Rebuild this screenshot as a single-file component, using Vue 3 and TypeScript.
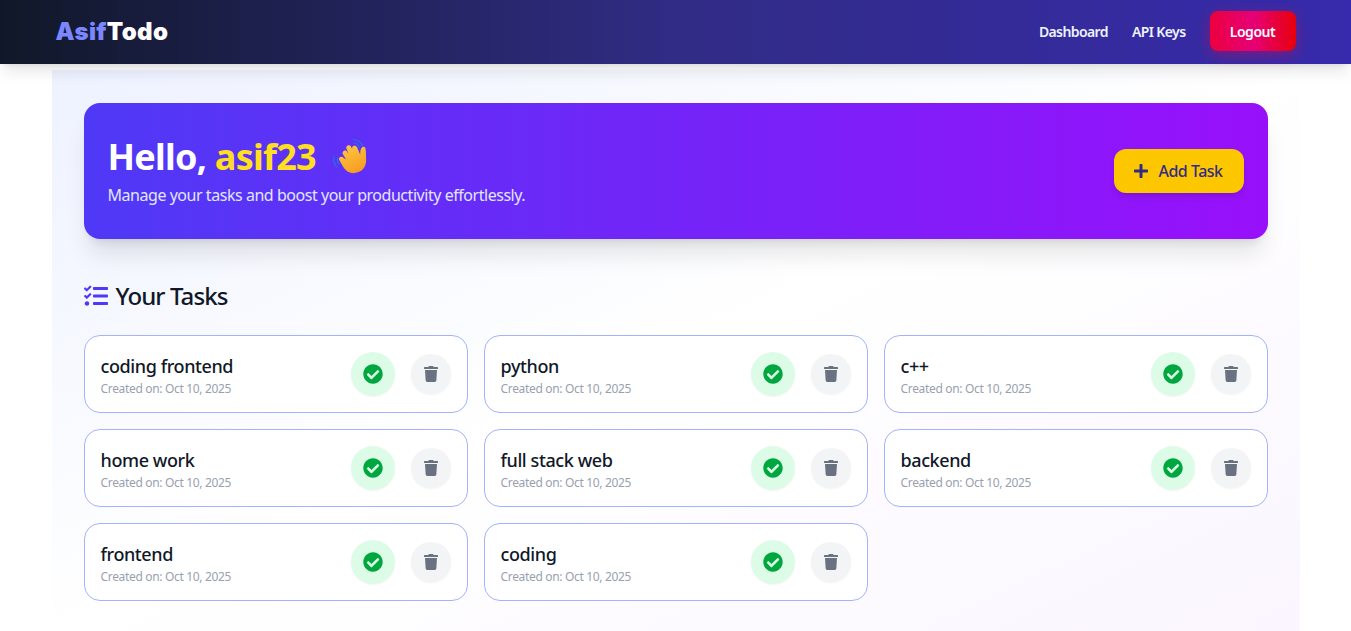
<script setup lang="ts">
const tasks = [
  { id: 1, title: 'coding frontend', date: 'Oct 10, 2025' },
  { id: 2, title: 'python', date: 'Oct 10, 2025' },
  { id: 3, title: 'c++', date: 'Oct 10, 2025' },
  { id: 4, title: 'home work', date: 'Oct 10, 2025' },
  { id: 5, title: 'full stack web', date: 'Oct 10, 2025' },
  { id: 6, title: 'backend', date: 'Oct 10, 2025' },
  { id: 7, title: 'frontend', date: 'Oct 10, 2025' },
  { id: 8, title: 'coding', date: 'Oct 10, 2025' },
]
</script>

<template>
  <div class="page">
    <nav class="navbar">
      <div class="logo"><span class="logo-accent">Asif</span>Todo</div>
      <div class="nav-links">
        <a class="nav-link">Dashboard</a>
        <a class="nav-link">API Keys</a>
        <button class="logout">Logout</button>
      </div>
    </nav>

    <main class="content">
      <section class="banner">
        <div>
          <h1 class="hello">
            <span>Hello, <span class="username">asif23</span></span>
            <svg class="wave" viewBox="0 0 40 40" aria-hidden="true">
              <defs>
                <linearGradient id="hand" x1="0.2" y1="0" x2="0.7" y2="1">
                  <stop offset="0" stop-color="#ffc93f" />
                  <stop offset="1" stop-color="#f59a23" />
                </linearGradient>
              </defs>
              <path d="M21 2.500c4.500 0 8.500 3 10 8M22 6c2.500.2 4.700 2 5.500 4.500" fill="none" stroke="#2374d8" stroke-width="1.200" stroke-linecap="round" />
              <path d="M2 20c-.8 3.500 0 7 2.800 10M5.500 21c-.4 2.200.2 4.400 1.700 6" fill="none" stroke="#2374d8" stroke-width="1.200" stroke-linecap="round" />
              <g transform="translate(0.5 1) scale(1.120 1)">
                <path
                  d="M12.200 21.500 9.300 16.200c-.7-1.300-.3-2.700.8-3.300s2.400-.2 3.100 1l1.200 2-1.900-5.200c-.5-1.400 0-2.700 1.200-3.200s2.500.1 3 1.400l.9 2.300c-.3-1.500.1-2.900 1.400-3.400 1.300-.4 2.500.3 3 1.600l2.800 7.300c-.2-2.900.2-5.800 1.500-7.300 1-1.100 2.800-.6 3.100.9.700 3.400.5 8.300.6 12.300.1 7-4.400 12-10.300 12.500-5.200.4-8.200-2.600-10.600-7.100l-3-5.900c-.6-1.300-.2-2.600.9-3.100s2.300-.1 3 1z"
                  fill="url(#hand)"
                />
              </g>
            </svg>
          </h1>
          <p class="tagline">Manage your tasks and boost your productivity effortlessly.</p>
        </div>
        <button class="add-task">
          <svg class="plus" viewBox="0 0 448 512" aria-hidden="true">
            <path d="M416 208H272V64c0-17.670-14.330-32-32-32h-32c-17.670 0-32 14.330-32 32v144H32c-17.670 0-32 14.330-32 32v32c0 17.670 14.330 32 32 32h144v144c0 17.670 14.330 32 32 32h32c17.670 0 32-14.330 32-32V304h144c17.670 0 32-14.330 32-32v-32c0-17.670-14.330-32-32-32z" />
          </svg>
          Add Task
        </button>
      </section>

      <h2 class="section-title">
        <svg class="tasks-icon" viewBox="0 0 512 512" aria-hidden="true">
          <path d="M139.610 35.500a12 12 0 0 0-17 0L58.930 98.810l-22.700-22.120a12 12 0 0 0-17 0L3.530 92.410a12 12 0 0 0 0 17l47.590 47.400a12.780 12.780 0 0 0 17.610 0l15.590-15.620L156.520 69a12.090 12.090 0 0 0 .09-17zm0 159.190a12 12 0 0 0-17 0l-63.680 63.720-22.700-22.100a12 12 0 0 0-17 0L3.530 252a12 12 0 0 0 0 17L51 316.500a12.770 12.770 0 0 0 17.600 0l15.700-15.690 72.200-72.220a12 12 0 0 0 .09-16.900zM64 368c-26.490 0-48.590 21.500-48.590 48S37.530 464 64 464a48 48 0 0 0 0-96zm432 16H208a16 16 0 0 0-16 16v32a16 16 0 0 0 16 16h288a16 16 0 0 0 16-16v-32a16 16 0 0 0-16-16zm0-320H208a16 16 0 0 0-16 16v32a16 16 0 0 0 16 16h288a16 16 0 0 0 16-16V80a16 16 0 0 0-16-16zm0 160H208a16 16 0 0 0-16 16v32a16 16 0 0 0 16 16h288a16 16 0 0 0 16-16v-32a16 16 0 0 0-16-16z" />
        </svg>
        Your Tasks
      </h2>

      <div class="task-grid">
        <article v-for="task in tasks" :key="task.id" class="task-card">
          <div>
            <h3 class="task-title">{{ task.title }}</h3>
            <p class="task-date">Created on: {{ task.date }}</p>
          </div>
          <div class="task-actions">
            <button class="btn-done">
              <svg viewBox="0 0 512 512" aria-hidden="true">
                <path d="M504 256c0 136.967-111.033 248-248 248S8 392.967 8 256 119.033 8 256 8s248 111.033 248 248zM227.314 387.314l184-184c6.248-6.248 6.248-16.379 0-22.627l-22.627-22.627c-6.248-6.249-16.379-6.249-22.628 0L216 308.118l-70.059-70.059c-6.248-6.248-16.379-6.248-22.628 0l-22.627 22.627c-6.248 6.248-6.248 16.379 0 22.627l104 104c6.249 6.249 16.379 6.249 22.628.001z" />
              </svg>
            </button>
            <button class="btn-delete">
              <svg viewBox="0 0 448 512" aria-hidden="true">
                <path d="M432 32H312l-9.400-18.700A24 24 0 0 0 281.100 0H166.800a23.720 23.720 0 0 0-21.400 13.300L136 32H16A16 16 0 0 0 0 48v32a16 16 0 0 0 16 16h416a16 16 0 0 0 16-16V48a16 16 0 0 0-16-16zM53.200 467a48 48 0 0 0 47.900 45h245.800a48 48 0 0 0 47.900-45L416 128H32z" />
              </svg>
            </button>
          </div>
        </article>
      </div>
    </main>
  </div>
</template>

<style>
html,
body {
  margin: 0;
  background: #fff;
}
</style>

<style scoped>
.page {
  height: 631px;
  overflow: hidden;
  font-family: 'Noto Sans', 'Open Sans', sans-serif;
  color: #101828;
}

.navbar {
  position: relative;
  z-index: 2;
  display: flex;
  align-items: center;
  justify-content: space-between;
  height: 64px;
  padding: 0 55.5px;
  background: linear-gradient(to right, #101828, #312c85, #372aac);
  box-shadow: 0 10px 15px -3px rgba(0, 0, 0, 0.1), 0 4px 6px -4px rgba(0, 0, 0, 0.1);
}

.logo {
  font-family: Inter, 'Noto Sans', sans-serif;
  font-size: 24px;
  font-weight: 900;
  line-height: 32px;
  letter-spacing: 0.35px;
  color: #fff;
}

.logo-accent {
  color: #7c86ff;
}

.nav-links {
  display: flex;
  align-items: center;
  gap: 24px;
  margin-bottom: 2px;
}

.nav-link {
  font-size: 14px;
  font-weight: 600;
  letter-spacing: -0.6px;
  color: #eef2ff;
}

.logout {
  width: 86px;
  height: 40px;
  border: 0;
  border-radius: 8px;
  font: 600 14px 'Noto Sans', 'Open Sans', sans-serif;
  letter-spacing: -0.45px;
  color: #fff;
  background: linear-gradient(to right, #ec003f, #e60076, #e7000b);
  box-shadow: 0 4px 14px rgba(236, 0, 63, 0.4);
}

.content {
  box-sizing: border-box;
  max-width: 1248px;
  height: 567px;
  margin: 6px auto 0;
  padding: 33px 32px 0;
  background: linear-gradient(to bottom right, #eef2ff, #fff, #faf5ff);
}

.banner {
  display: flex;
  align-items: center;
  justify-content: space-between;
  box-sizing: border-box;
  height: 136px;
  padding: 0 24px;
  border-radius: 16px;
  background: linear-gradient(to right, #4f39f6, #9810fa);
  box-shadow: 0 20px 25px -5px rgba(0, 0, 0, 0.1), 0 8px 10px -6px rgba(0, 0, 0, 0.1);
}

.hello {
  display: flex;
  align-items: center;
  margin: 0;
  padding-top: 2px;
  font-size: 36px;
  font-weight: 700;
  line-height: 40px;
  letter-spacing: -0.75px;
  color: #fff;
}

.username {
  color: #ffdf20;
}

.wave {
  width: 40px;
  height: 40px;
  margin-left: 16px;
}

.tagline {
  margin: 6px 0 0;
  font-size: 16px;
  line-height: 24px;
  letter-spacing: -0.46px;
  color: #e0e7ff;
}

.add-task {
  display: flex;
  align-items: center;
  justify-content: center;
  gap: 10px;
  width: 130px;
  height: 44px;
  padding: 0;
  border: 0;
  border-radius: 12px;
  font: 500 16px 'Noto Sans', 'Open Sans', sans-serif;
  letter-spacing: -0.5px;
  color: #312c85;
  background: #fdc700;
  box-shadow: 0 4px 6px -1px rgba(0, 0, 0, 0.1), 0 2px 4px -2px rgba(0, 0, 0, 0.1);
}

.plus {
  width: 14px;
  height: 16px;
  fill: currentColor;
}

.section-title {
  display: flex;
  align-items: center;
  gap: 8px;
  margin: 41px 0 23px;
  font-size: 24px;
  font-weight: 500;
  line-height: 32px;
  letter-spacing: -0.9px;
  color: #101828;
}

.tasks-icon {
  width: 24px;
  height: 24px;
  fill: #4f39f6;
}

.task-grid {
  display: grid;
  grid-template-columns: repeat(3, 1fr);
  gap: 16px;
}

.task-card {
  display: flex;
  align-items: center;
  justify-content: space-between;
  box-sizing: border-box;
  height: 78px;
  padding: 0 16px;
  border: 1px solid #a3b3ff;
  border-radius: 16px;
  background: #fff;
}

.task-title {
  margin: 0;
  font-size: 18px;
  font-weight: 500;
  line-height: 28px;
  letter-spacing: -0.4px;
  color: #101828;
}

.task-date {
  margin: 1px 0 0;
  font-size: 12px;
  line-height: 16px;
  letter-spacing: -0.33px;
  color: #99a1af;
}

.task-actions {
  display: flex;
  align-items: center;
  gap: 16px;
}

.task-actions button {
  display: flex;
  align-items: center;
  justify-content: center;
  padding: 0;
  border: 0;
  border-radius: 50%;
  box-shadow: 0 1px 2px rgba(0, 0, 0, 0.05);
}

.btn-done {
  width: 44px;
  height: 44px;
  background: #dcfce7;
}

.btn-done svg {
  width: 20px;
  height: 20px;
  fill: #00a63e;
}

.btn-delete {
  width: 40px;
  height: 40px;
  background: #f3f4f6;
}

.btn-delete svg {
  width: 14px;
  height: 16px;
  fill: #6a7282;
}
</style>
